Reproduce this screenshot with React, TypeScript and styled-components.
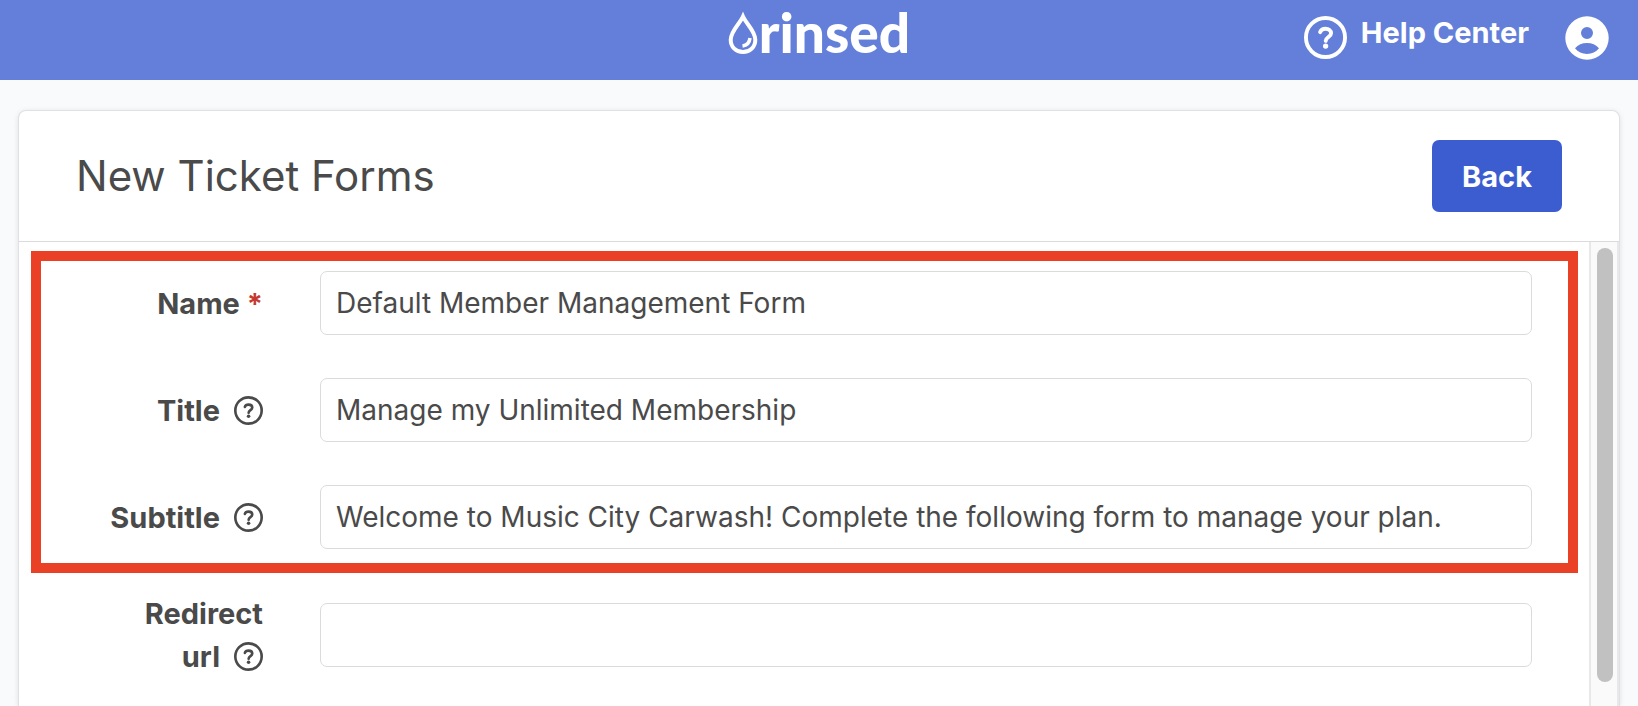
import styled, { createGlobalStyle } from "styled-components";

const GlobalStyle = createGlobalStyle`
  *, *::before, *::after { box-sizing: border-box; }
  body {
    margin: 0;
    background: #f9fafc;
    color: #4a4a4a;
    font-family: Inter, "Liberation Sans", sans-serif;
    font-size: 28px;
    line-height: 43px;
  }
`;

const Page = styled.div`
  display: flex;
  flex-direction: column;
  height: 100vh;
  overflow: hidden;
`;

const TopBar = styled.header`
  display: grid;
  grid-template-columns: 1fr auto 1fr;
  flex: none;
  height: 80px;
  padding: 0 29px;
  background: #647fda;
  color: #fff;
`;

const Logo = styled.a`
  grid-column: 2;
  display: flex;
  align-items: flex-start;
  gap: 1px;
  padding-top: 11px;
  color: inherit;
  text-decoration: none;
`;

const Wordmark = styled.span`
  font-family: Lato, sans-serif;
  font-size: 55px;
  font-weight: 900;
  line-height: 42px;
`;

const TopActions = styled.nav`
  display: flex;
  justify-content: flex-end;
  align-items: flex-start;
  padding-top: 16px;
`;

const HelpLink = styled.a`
  display: flex;
  align-items: flex-start;
  gap: 14px;
  margin-right: 36px;
  color: inherit;
  font-size: 29px;
  font-weight: 700;
  line-height: 34px;
  text-decoration: none;
`;

const AccountButton = styled.button`
  display: flex;
  padding: 0;
  border: 0;
  background: none;
  color: inherit;
`;

const Card = styled.main`
  display: flex;
  flex: 1;
  flex-direction: column;
  min-height: 0;
  margin: 31px 19px 0;
  border-radius: 7px 7px 0 0;
  background: #fff;
  box-shadow: 0 0 0 1px #e0e1e3, 0 1px 6px rgba(10, 10, 10, 0.14);
`;

const CardHeader = styled.div`
  display: flex;
  flex: none;
  align-items: center;
  justify-content: space-between;
  height: 131px;
  padding: 0 57px;
  border-bottom: 1px solid #dbdbdb;
`;

const Heading = styled.h1`
  margin: 0;
  font-size: 42px;
  font-weight: 400;
  line-height: 56px;
`;

const BackButton = styled.button`
  height: 72px;
  padding: 0 30px;
  border: 0;
  border-radius: 7px;
  background: #3c5dd0;
  color: #fff;
  font: inherit;
  font-size: 29px;
  font-weight: 700;
`;

const CardBody = styled.div`
  display: flex;
  flex: 1;
  min-height: 0;
`;

const Form = styled.form`
  flex: 1;
  min-width: 0;
  overflow: hidden;
`;

const Highlight = styled.div`
  display: flex;
  flex-direction: column;
  gap: 43px;
  margin: 9px 11px 19px 12px;
  padding: 10px 36px 14px;
  border: 10px solid #ea4025;
`;

const PlainRows = styled.div`
  padding: 0 57px 0 58px;
`;

const Row = styled.div`
  display: grid;
  grid-template-columns: 186px 1fr;
  column-gap: 57px;
  align-items: center;
`;

const Label = styled.label`
  font-size: 29px;
  font-weight: 700;
  text-align: right;
`;

const LastWord = styled.span`
  white-space: nowrap;
`;

const Required = styled.span`
  color: #c43a31;
`;

const Hint = styled.span`
  display: inline-flex;
  margin-left: 14px;
  vertical-align: -4px;
`;

const TextInput = styled.input`
  width: 100%;
  height: 64px;
  padding: 0 15px;
  border: 1px solid #dbdbdb;
  border-radius: 7px;
  background: #fff;
  color: inherit;
  font: inherit;
  outline: none;
`;

const ScrollTrack = styled.div`
  flex: none;
  width: 30px;
  padding: 6px;
  border: solid #e8e8e8;
  border-width: 0 2px;
  background: #fafafa;
`;

const ScrollThumb = styled.div`
  width: 16px;
  height: 96%;
  border-radius: 8px;
  background: #c1c1c1;
`;

function QuestionIcon({ size, stroke }: { size: number; stroke: number }) {
  return (
    <svg width={size} height={size} viewBox="0 0 44 44" fill="none" stroke="currentColor" aria-hidden="true">
      <circle cx="22" cy="22" r={22 - stroke / 2} strokeWidth={stroke} />
      <path
        d="M16.500 16.500C17.300 14 19.500 13 22 13C25.300 13 27.700 14.800 27.700 17.600C27.700 21.500 22.300 21.500 22.200 25.500"
        strokeWidth="4"
        strokeLinecap="round"
      />
      <circle cx="22.1" cy="30.8" r="2.7" fill="currentColor" stroke="none" />
    </svg>
  );
}

function DropIcon() {
  return (
    <svg width="30" height="44" viewBox="0 0 30 44" fill="none" stroke="currentColor" aria-hidden="true">
      <path
        d="M15 5.500C12 12.500 2.700 20 2.700 28.700C2.700 36 8 41 15 41S27.300 36 27.300 28.700C27.300 20 18 12.500 15 5.500Z"
        strokeWidth="4"
        strokeLinejoin="miter"
      />
      <path d="M22 27C21.500 31.500 19 34.500 14.500 35" strokeWidth="3.500" />
    </svg>
  );
}

function AccountIcon() {
  return (
    <svg width="44" height="44" viewBox="0 0 44 44" fill="currentColor" fillRule="evenodd" aria-hidden="true">
      <path d="M22 0.300a21.700 21.700 0 1 0 0 43.400a21.700 21.700 0 1 0 0-43.400ZM22 11a6 6 0 1 1 0 12a6 6 0 1 1 0-12ZM10 32.300C13 28.700 17 27 22 27S31 28.700 34 32.300C31 36 27 38 22 38S13 36 10 32.300Z" />
    </svg>
  );
}

interface FieldProps {
  id: string;
  label: string;
  value?: string;
  required?: boolean;
}

function Field({ id, label, value = "", required = false }: FieldProps) {
  const words = label.split(" ");
  const last = words.pop();
  return (
    <Row>
      <Label htmlFor={id}>
        {words.map((word) => `${word} `)}
        <LastWord>
          {last}
          {required ? (
            <Required> *</Required>
          ) : (
            <Hint>
              <QuestionIcon size={29} stroke={4} />
            </Hint>
          )}
        </LastWord>
      </Label>
      <TextInput id={id} type="text" defaultValue={value} required={required} />
    </Row>
  );
}

export default function App() {
  return (
    <Page>
      <GlobalStyle />
      <TopBar>
        <Logo href="#">
          <DropIcon />
          <Wordmark>rinsed</Wordmark>
        </Logo>
        <TopActions>
          <HelpLink href="#">
            <QuestionIcon size={43} stroke={4} />
            Help Center
          </HelpLink>
          <AccountButton type="button" aria-label="Account">
            <AccountIcon />
          </AccountButton>
        </TopActions>
      </TopBar>
      <Card>
        <CardHeader>
          <Heading>New Ticket Forms</Heading>
          <BackButton type="button">Back</BackButton>
        </CardHeader>
        <CardBody>
          <Form>
            <Highlight>
              <Field id="name" label="Name" value="Default Member Management Form" required />
              <Field id="title" label="Title" value="Manage my Unlimited Membership" />
              <Field
                id="subtitle"
                label="Subtitle"
                value="Welcome to Music City Carwash! Complete the following form to manage your plan."
              />
            </Highlight>
            <PlainRows>
              <Field id="redirect-url" label="Redirect url" />
            </PlainRows>
          </Form>
          <ScrollTrack>
            <ScrollThumb />
          </ScrollTrack>
        </CardBody>
      </Card>
    </Page>
  );
}
